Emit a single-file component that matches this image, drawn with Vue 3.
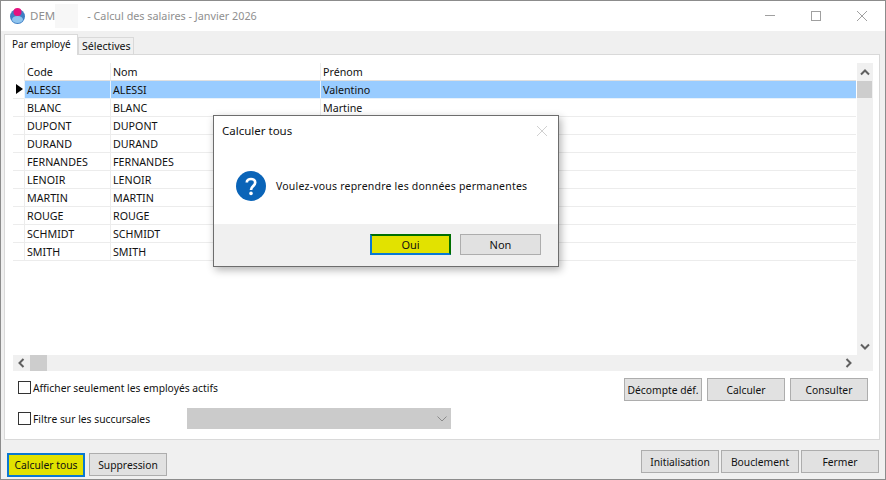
<script setup>
const rows = [
  ['ALESSI', 'ALESSI', 'Valentino'],
  ['BLANC', 'BLANC', 'Martine'],
  ['DUPONT', 'DUPONT', ''],
  ['DURAND', 'DURAND', ''],
  ['FERNANDES', 'FERNANDES', ''],
  ['LENOIR', 'LENOIR', ''],
  ['MARTIN', 'MARTIN', ''],
  ['ROUGE', 'ROUGE', ''],
  ['SCHMIDT', 'SCHMIDT', ''],
  ['SMITH', 'SMITH', ''],
]
</script>

<template>
  <div class="win">
    <div class="titlebar">
      <svg class="logo" width="15" height="16" viewBox="0 0 15 16">
        <circle cx="7.5" cy="8.5" r="7.5" fill="#3f7fc4" />
        <ellipse cx="7.5" cy="11.5" rx="5.5" ry="3.5" fill="#8fc4ee" />
        <circle cx="7.5" cy="4" r="4" fill="#e5127f" />
      </svg>
      <span class="wtitle dem">DEM</span>
      <span class="blur"></span>
      <span class="wtitle">- Calcul des salaires - Janvier 2026</span>
      <div class="winctl">
        <svg width="12" height="12" viewBox="0 0 12 12"><path d="M1 5.5H11" stroke="#a0a0a0" fill="none" /></svg>
        <svg width="12" height="12" viewBox="0 0 12 12"><rect x="1.5" y="1.5" width="9" height="9" stroke="#a0a0a0" fill="none" /></svg>
        <svg width="12" height="12" viewBox="0 0 12 12"><path d="M1 1L11 11M11 1L1 11" stroke="#a0a0a0" fill="none" /></svg>
      </div>
    </div>

    <div class="body">
      <div class="tabs">
        <div class="tab active">Par employé</div>
        <div class="tab">Sélectives</div>
      </div>
      <div class="panel">
        <div class="gridwrap">
          <div class="gridmain">
            <div class="grid">
              <div class="ghead">
                <div class="rh"></div>
                <div class="c c1">Code</div>
                <div class="c c2">Nom</div>
                <div class="c c3">Prénom</div>
              </div>
              <div v-for="(r, i) in rows" :key="r[0]" class="grow" :class="{ sel: i === 0 }">
                <div class="rh"><span v-if="i === 0" class="arrow"></span></div>
                <div class="c c1">{{ r[0] }}</div>
                <div class="c c2">{{ r[1] }}</div>
                <div class="c c3">{{ r[2] }}</div>
              </div>
            </div>
            <div class="vbar">
              <svg width="10" height="7" viewBox="0 0 10 7"><path d="M1 5.5L5 1.5L9 5.5" stroke="#606060" stroke-width="2" fill="none" /></svg>
              <div class="vthumb"></div>
              <svg class="down" width="10" height="7" viewBox="0 0 10 7"><path d="M1 1.5L5 5.5L9 1.5" stroke="#606060" stroke-width="2" fill="none" /></svg>
            </div>
          </div>
          <div class="hbar">
            <svg width="7" height="10" viewBox="0 0 7 10"><path d="M5.5 1L1.5 5L5.5 9" stroke="#606060" stroke-width="2" fill="none" /></svg>
            <div class="hthumb"></div>
            <svg class="right" width="7" height="10" viewBox="0 0 7 10"><path d="M1.5 1L5.5 5L1.5 9" stroke="#606060" stroke-width="2" fill="none" /></svg>
          </div>
        </div>

        <div class="opts">
          <div class="optleft">
            <label class="chk"><span class="box"></span>Afficher seulement les employés actifs</label>
            <div class="filter">
              <label class="chk flabel"><span class="box"></span>Filtre sur les succursales</label>
              <div class="combo">
                <svg width="10" height="6" viewBox="0 0 10 6"><path d="M0.5 0.5L5 5L9.5 0.5" stroke="#8a8a8a" fill="none" /></svg>
              </div>
            </div>
          </div>
          <div class="optright">
            <button class="btn w78">Décompte déf.</button>
            <button class="btn w78">Calculer</button>
            <button class="btn w78">Consulter</button>
          </div>
        </div>
      </div>

      <div class="footer">
        <div class="fleft">
          <button class="btn hot calc">Calculer tous</button>
          <button class="btn w78">Suppression</button>
        </div>
        <div class="fright">
          <button class="btn w78">Initialisation</button>
          <button class="btn w78">Bouclement</button>
          <button class="btn w78">Fermer</button>
        </div>
      </div>
    </div>

    <div class="dialog">
      <div class="dmain">
        <div class="dtitle">
          <span>Calculer tous</span>
          <svg width="12" height="12" viewBox="0 0 12 12"><path d="M1 1L11 11M11 1L1 11" stroke="#d0d0d0" fill="none" /></svg>
        </div>
        <div class="dmsg">
          <svg width="30" height="30" viewBox="0 0 30 30">
            <circle cx="15" cy="15" r="15" fill="#0a64b8" />
            <path d="M10.8 11.5C10.8 6.8 19.2 6.8 19.2 11.5C19.2 15 15 15 15 19" stroke="#fff" stroke-width="2.7" fill="none" />
            <circle cx="15" cy="22.4" r="1.8" fill="#fff" />
          </svg>
          <span>Voulez-vous reprendre les données permanentes</span>
        </div>
      </div>
      <div class="dfoot">
        <button class="btn oui">Oui</button>
        <button class="btn non">Non</button>
      </div>
    </div>
  </div>
</template>

<style>
html, body { margin: 0; background: #fff; }
</style>

<style scoped>
.win {
  box-sizing: border-box;
  width: 886px;
  height: 480px;
  border: 1px solid #8c8c8c;
  position: relative;
  display: flex;
  flex-direction: column;
  font-family: "Noto Sans", "Liberation Sans", sans-serif;
  font-size: 10.3px;
  color: #111;
  overflow: hidden;
  background: #f0f0f0;
}
.titlebar {
  height: 30px;
  flex: none;
  background: #fff;
  display: flex;
  align-items: center;
  padding-left: 9px;
  box-sizing: border-box;
}
.logo { margin-right: 5px; }
.wtitle { font-size: 10.8px; color: #8f8f8f; margin-bottom: 2px; }
.dem { font-size: 11.5px; }
.blur { width: 23px; height: 24px; margin: 0 9px 0 0; background: #f7f7f7; }
.winctl {
  margin-left: auto;
  display: flex;
  gap: 34px;
  padding-right: 17px;
}
.body {
  flex: 1;
  display: flex;
  flex-direction: column;
  padding: 3px 5px 0 3px;
  min-height: 0;
}
.tabs {
  display: flex;
  align-items: flex-end;
  height: 20px;
  flex: none;
  position: relative;
  z-index: 1;
}
.tab {
  box-sizing: border-box;
  height: 17px;
  padding: 0 3px;
  border: 1px solid #d9d9d9;
  border-bottom: none;
  line-height: 16px;
  width: 56px;
  white-space: nowrap;
  background: #f0f0f0;
  font-size: 10.6px;
}
.tab.active {
  height: 21px;
  width: 74px;
  background: #fff;
  line-height: 18px;
  padding-left: 7px;
  margin-bottom: -1px;
  font-size: 10px;
}
.panel {
  box-sizing: border-box;
  height: 386px;
  flex: none;
  background: #fff;
  border: 1px solid #d9d9d9;
  padding: 8px 6px 0 8px;
  display: flex;
  flex-direction: column;
}
.gridwrap {
  height: 308px;
  flex: none;
  display: flex;
  flex-direction: column;
}
.gridmain {
  flex: 1;
  display: flex;
  min-height: 0;
}
.grid { flex: 1; min-width: 0; font-size: 10.7px; }
.ghead, .grow {
  display: flex;
  height: 18px;
  line-height: 18px;
}
.rh {
  width: 11px;
  flex: none;
  border-bottom: 1px solid #ececec;
  position: relative;
  box-sizing: border-box;
}
.ghead .rh { border-bottom: none; }
.arrow {
  position: absolute;
  left: 3px;
  top: 3px;
  width: 0;
  height: 0;
  border-left: 7px solid #000;
  border-top: 5.5px solid transparent;
  border-bottom: 5.5px solid transparent;
}
.c {
  box-sizing: border-box;
  border-left: 1px solid #ececec;
  border-bottom: 1px solid #ececec;
  padding-left: 2px;
  white-space: nowrap;
  overflow: hidden;
}
.ghead .c { border-bottom: 1px solid #e0e0e0; }
.c1 { width: 86px; }
.c2 { width: 210px; }
.c3 { flex: 1; }
.sel .c { background: #99ccff; border-color: #e8f2fb; }
.vbar {
  width: 16px;
  flex: none;
  margin-left: 1px;
  background: #f0f0f0;
  display: flex;
  flex-direction: column;
  align-items: center;
  padding-top: 6px;
  box-sizing: border-box;
}
.vthumb {
  width: 15px;
  height: 17px;
  background: #cdcdcd;
  margin-top: 5px;
  align-self: flex-start;
}
.down { margin-top: auto; margin-bottom: 5px; }
.hbar {
  height: 16px;
  flex: none;
  background: #f0f0f0;
  display: flex;
  align-items: center;
  padding-left: 5px;
}
.hthumb { width: 17px; height: 16px; background: #cdcdcd; margin-left: 5px; }
.right { margin-left: auto; margin-right: 21px; }
.opts {
  display: flex;
  justify-content: space-between;
  padding: 7px 5px 0 5px;
}
.optleft { display: flex; flex-direction: column; gap: 12px; padding-top: 1px; }
.chk { display: flex; align-items: center; white-space: nowrap; height: 17px; }
.flabel { width: 169px; }
.box {
  box-sizing: border-box;
  width: 13px;
  height: 13px;
  border: 1px solid #333;
  background: #fff;
  margin-right: 2px;
}
.filter { display: flex; align-items: center; }
.combo {
  box-sizing: border-box;
  width: 264px;
  height: 21px;
  background: #cbcbcb;
  display: flex;
  align-items: center;
  justify-content: flex-end;
  padding-right: 4px;
}
.optright { display: flex; gap: 5px; }
.btn {
  box-sizing: border-box;
  font: inherit;
  color: #111;
  background: #e1e1e1;
  border: 1px solid #adadad;
  height: 23px;
  padding: 0;
  white-space: nowrap;
}
.w78 { width: 78px; }
.footer {
  display: flex;
  flex: 1;
  justify-content: space-between;
  padding: 0 1px 0 3px;
}
.fleft { display: flex; gap: 4px; padding-top: 13px; align-items: flex-start; }
.fright { display: flex; gap: 2px; padding-top: 10px; align-items: flex-start; }
.hot {
  background: #e2e200;
  border: 2px solid #0a78d2;
}
.calc { width: 78px; height: 24px; }
.dialog {
  position: absolute;
  left: 212px;
  top: 114px;
  box-sizing: border-box;
  width: 346px;
  height: 152px;
  background: #fff;
  border: 1px solid #6d6d6d;
  box-shadow: 2px 3px 8px rgba(0, 0, 0, 0.3);
  display: flex;
  flex-direction: column;
}
.dmain { flex: 1; }
.dtitle {
  display: flex;
  justify-content: space-between;
  align-items: center;
  height: 29px;
  padding: 0 10px 0 8px;
  font-size: 11.5px;
}
.dmsg {
  display: flex;
  align-items: center;
  gap: 10px;
  padding: 26px 0 0 22px;
  font-size: 10.5px;
  letter-spacing: 0.21px;
}
.dfoot {
  height: 42px;
  flex: none;
  background: #f0f0f0;
  display: flex;
  justify-content: flex-end;
  align-items: flex-start;
  padding: 10px 17px 0 0;
  gap: 9px;
  box-sizing: border-box;
  font-size: 11px;
}
.oui {
  width: 81px;
  height: 21px;
  background: #e2e200;
  border: 2px solid #006f00;
  border-bottom-color: #0a78d2;
  border-left-color: #0a78d2;
}
.non { width: 81px; height: 21px; }
</style>
